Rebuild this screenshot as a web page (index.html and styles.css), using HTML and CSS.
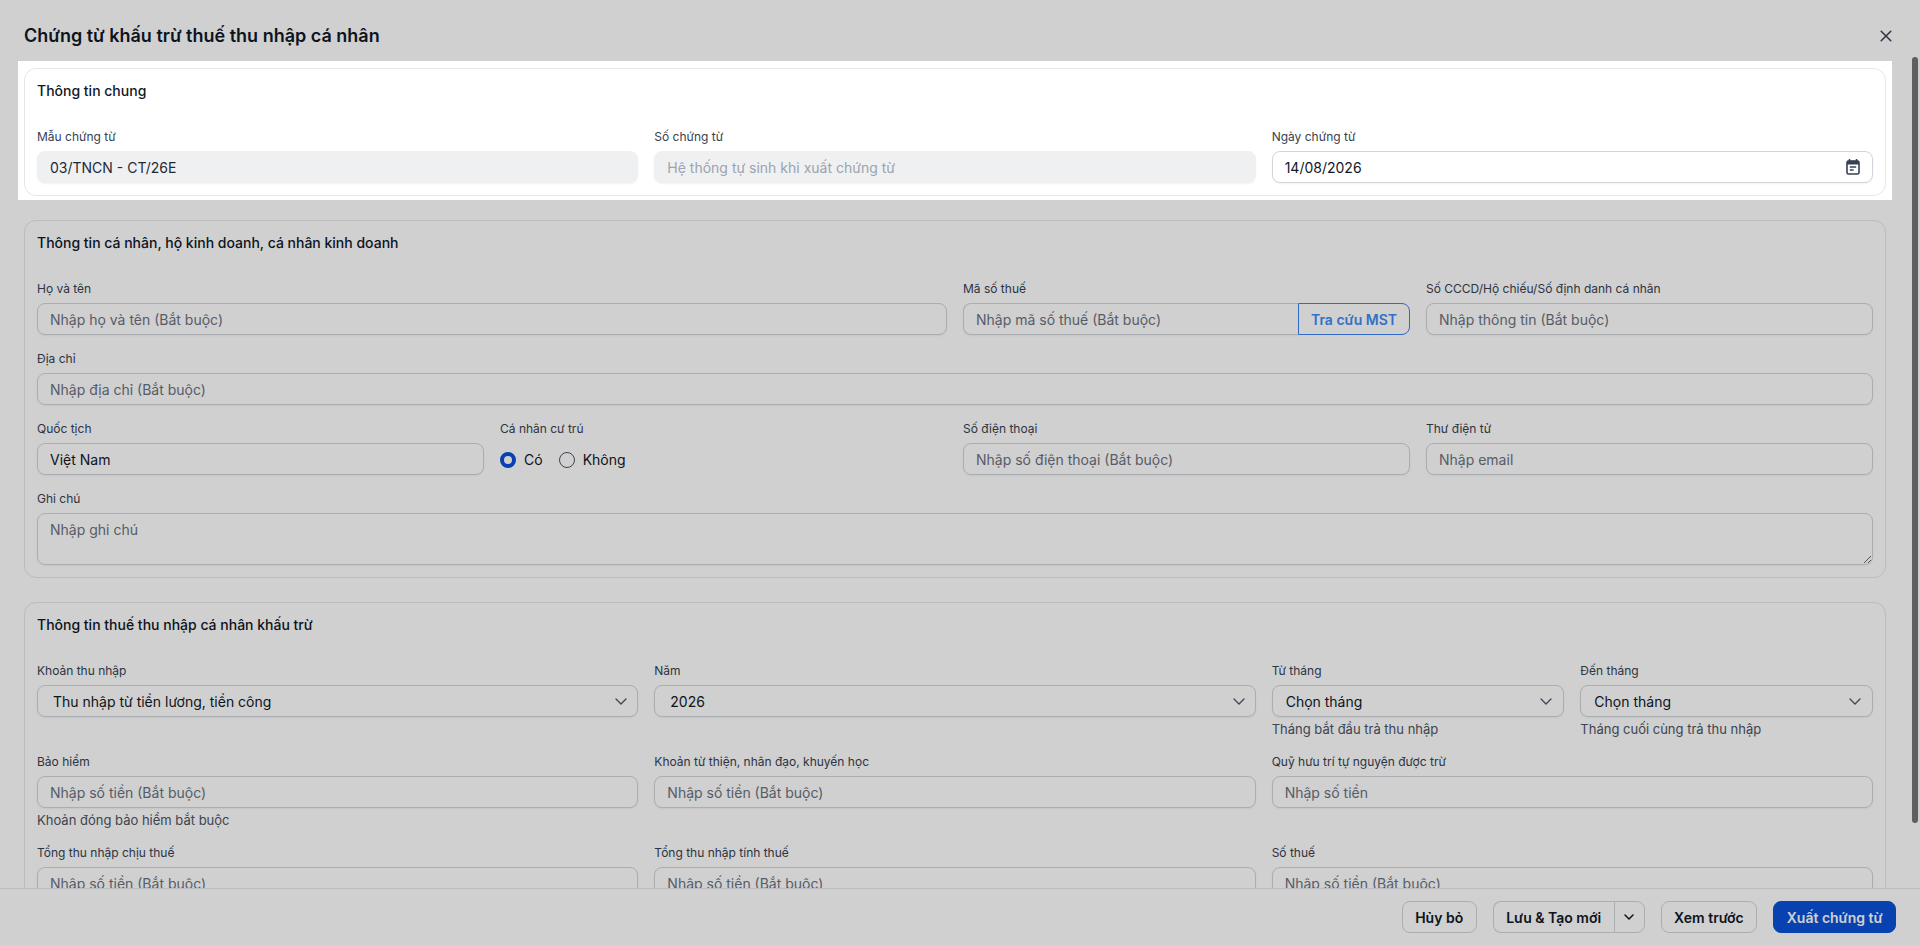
FILE: index.html
```html
<!DOCTYPE html>
<html lang="vi">
<head>
    <meta charset="UTF-8">
    <meta name="viewport" content="width=device-width, initial-scale=1.0">
    <title>Chứng từ khấu trừ thuế thu nhập cá nhân</title>
    <link rel="stylesheet" href="styles.css">
</head>
<body>
    <div class="dialog">
        <!-- Tiêu đề -->
        <header class="dialog-header">
            <h1>Chứng từ khấu trừ thuế thu nhập cá nhân</h1>
            <button class="close-button" aria-label="Đóng">
                <svg width="12" height="12" viewBox="0 0 12 12"><path d="M1.2 1.2l9.6 9.6M10.8 1.2l-9.6 9.6" fill="none" stroke="#374151" stroke-width="1.5" stroke-linecap="round"/></svg>
            </button>
        </header>

        <main class="dialog-body">
            <!-- Thông tin chung -->
            <section class="card">
                <h2>Thông tin chung</h2>
                <div class="form-grid">
                    <div class="field span-4">
                        <label>Mẫu chứng từ</label>
                        <input class="input filled" type="text" value="03/TNCN - CT/26E" disabled>
                    </div>
                    <div class="field span-4">
                        <label>Số chứng từ</label>
                        <input class="input" type="text" placeholder="Hệ thống tự sinh khi xuất chứng từ" disabled>
                    </div>
                    <div class="field span-4">
                        <label>Ngày chứng từ</label>
                        <div class="box">
                            <span>14/08/2026</span>
                            <svg class="calendar-icon" width="14" height="16" viewBox="0 0 14 16"><path d="M3.5 0.5v2M10.5 0.5v2" stroke="#374151" stroke-width="1.6" stroke-linecap="round"/><rect x="1" y="2" width="12" height="13" rx="1.6" fill="none" stroke="#374151" stroke-width="1.6"/><path d="M1 2.8a1 1 0 0 1 1-1h10a1 1 0 0 1 1 1v2.6H1z" fill="#374151"/><path d="M3.8 8h6.4M3.8 11h3.8" stroke="#374151" stroke-width="1.4"/></svg>
                        </div>
                    </div>
                </div>
            </section>

            <!-- Thông tin cá nhân -->
            <section class="card">
                <h2>Thông tin cá nhân, hộ kinh doanh, cá nhân kinh doanh</h2>
                <div class="form-grid">
                    <div class="field span-6">
                        <label>Họ và tên</label>
                        <input class="input" type="text" placeholder="Nhập họ và tên (Bắt buộc)">
                    </div>
                    <div class="field span-3">
                        <label>Mã số thuế</label>
                        <div class="input-group">
                            <input class="input" type="text" placeholder="Nhập mã số thuế (Bắt buộc)">
                            <button class="lookup-button">Tra cứu MST</button>
                        </div>
                    </div>
                    <div class="field span-3">
                        <label>Số CCCD/Hộ chiếu/Số định danh cá nhân</label>
                        <input class="input" type="text" placeholder="Nhập thông tin (Bắt buộc)">
                    </div>
                    <div class="field span-12">
                        <label>Địa chỉ</label>
                        <input class="input" type="text" placeholder="Nhập địa chỉ (Bắt buộc)">
                    </div>
                    <div class="field span-3">
                        <label>Quốc tịch</label>
                        <input class="input" type="text" value="Việt Nam">
                    </div>
                    <div class="field span-3">
                        <label>Cá nhân cư trú</label>
                        <div class="radio-group">
                            <span class="radio checked"></span><span class="radio-text">Có</span>
                            <span class="radio"></span><span class="radio-text">Không</span>
                        </div>
                    </div>
                    <div class="field span-3">
                        <label>Số điện thoại</label>
                        <input class="input" type="text" placeholder="Nhập số điện thoại (Bắt buộc)">
                    </div>
                    <div class="field span-3">
                        <label>Thư điện tử</label>
                        <input class="input" type="text" placeholder="Nhập email">
                    </div>
                    <div class="field span-12">
                        <label>Ghi chú</label>
                        <textarea class="input textarea" placeholder="Nhập ghi chú"></textarea>
                    </div>
                </div>
            </section>

            <!-- Thông tin thuế -->
            <section class="card">
                <h2>Thông tin thuế thu nhập cá nhân khấu trừ</h2>
                <div class="form-grid">
                    <div class="field span-4">
                        <label>Khoản thu nhập</label>
                        <div class="box select wide">
                            <span>Thu nhập từ tiền lương, tiền công</span>
                            <svg width="12" height="7" viewBox="0 0 12 7"><path d="M1 1l5 5 5-5" fill="none" stroke="#4b5563" stroke-width="1.3" stroke-linecap="round" stroke-linejoin="round"/></svg>
                        </div>
                    </div>
                    <div class="field span-4">
                        <label>Năm</label>
                        <div class="box select wide">
                            <span>2026</span>
                            <svg width="12" height="7" viewBox="0 0 12 7"><path d="M1 1l5 5 5-5" fill="none" stroke="#4b5563" stroke-width="1.3" stroke-linecap="round" stroke-linejoin="round"/></svg>
                        </div>
                    </div>
                    <div class="field span-2">
                        <label>Từ tháng</label>
                        <div class="box select">
                            <span>Chọn tháng</span>
                            <svg width="12" height="7" viewBox="0 0 12 7"><path d="M1 1l5 5 5-5" fill="none" stroke="#4b5563" stroke-width="1.3" stroke-linecap="round" stroke-linejoin="round"/></svg>
                        </div>
                        <p class="hint">Tháng bắt đầu trả thu nhập</p>
                    </div>
                    <div class="field span-2">
                        <label>Đến tháng</label>
                        <div class="box select">
                            <span>Chọn tháng</span>
                            <svg width="12" height="7" viewBox="0 0 12 7"><path d="M1 1l5 5 5-5" fill="none" stroke="#4b5563" stroke-width="1.3" stroke-linecap="round" stroke-linejoin="round"/></svg>
                        </div>
                        <p class="hint">Tháng cuối cùng trả thu nhập</p>
                    </div>
                    <div class="field span-4">
                        <label>Bảo hiểm</label>
                        <input class="input" type="text" placeholder="Nhập số tiền (Bắt buộc)">
                        <p class="hint">Khoản đóng bảo hiểm bắt buộc</p>
                    </div>
                    <div class="field span-4">
                        <label>Khoản từ thiện, nhân đạo, khuyến học</label>
                        <input class="input" type="text" placeholder="Nhập số tiền (Bắt buộc)">
                    </div>
                    <div class="field span-4">
                        <label>Quỹ hưu trí tự nguyện được trừ</label>
                        <input class="input" type="text" placeholder="Nhập số tiền">
                    </div>
                    <div class="field span-4">
                        <label>Tổng thu nhập chịu thuế</label>
                        <input class="input" type="text" placeholder="Nhập số tiền (Bắt buộc)">
                    </div>
                    <div class="field span-4">
                        <label>Tổng thu nhập tính thuế</label>
                        <input class="input" type="text" placeholder="Nhập số tiền (Bắt buộc)">
                    </div>
                    <div class="field span-4">
                        <label>Số thuế</label>
                        <input class="input" type="text" placeholder="Nhập số tiền (Bắt buộc)">
                    </div>
                </div>
            </section>
        </main>

        <!-- Các nút thao tác -->
        <footer class="dialog-footer">
            <button class="btn">Hủy bỏ</button>
            <div class="btn-split">
                <button class="btn">Lưu &amp; Tạo mới</button>
                <button class="btn btn-arrow" aria-label="Thêm">
                    <svg width="10" height="6" viewBox="0 0 10 6"><path d="M1 1l4 4 4-4" fill="none" stroke="#111827" stroke-width="1.5" stroke-linecap="round" stroke-linejoin="round"/></svg>
                </button>
            </div>
            <button class="btn">Xem trước</button>
            <button class="btn btn-primary">Xuất chứng từ</button>
        </footer>
    </div>

    <!-- Thanh cuộn -->
    <div class="scroll-thumb"></div>

    <!-- Lớp phủ hướng dẫn, làm nổi bật phần Thông tin chung -->
    <div class="spotlight"></div>
</body>
</html>
```

FILE: styles.css
```css
/* Estilos generales */
* {
    box-sizing: border-box;
}

html, body {
    height: 100%;
}

body {
    margin: 0;
    background-color: #fff;
    color: #111827;
    font-family: 'Inter', 'Liberation Sans', sans-serif;
    font-size: 14px;
    overflow: hidden;
}

.dialog {
    display: flex;
    flex-direction: column;
    height: 100vh;
}

/* Header */
.dialog-header {
    flex: none;
    display: flex;
    align-items: center;
    justify-content: space-between;
    height: 57px;
    padding: 22px 28px 7px 24px;
}

.dialog-header h1 {
    margin: 0;
    font-size: 18px;
    font-weight: 600;
    line-height: 28px;
}

.close-button {
    display: flex;
    padding: 0;
    background: none;
    border: none;
}

/* Body */
.dialog-body {
    flex: 1;
    min-height: 0;
    overflow: hidden;
    padding: 11px 34px 0 24px;
}

.scroll-thumb {
    position: absolute;
    top: 57px;
    right: 2px;
    width: 6px;
    height: 766px;
    background-color: #757575;
    border-radius: 3px;
}

.card {
    padding: 12px;
    margin-bottom: 24px;
    border: 1px solid #e5e7eb;
    border-radius: 12px;
}

.card:last-child {
    margin-bottom: 0;
}

.card h2 {
    margin: 0 0 28px;
    font-size: 14px;
    font-weight: 500;
    line-height: 20px;
}

.form-grid {
    display: grid;
    grid-template-columns: repeat(12, 1fr);
    gap: 16px;
}

.span-2 { grid-column: span 2; }
.span-3 { grid-column: span 3; }
.span-4 { grid-column: span 4; }
.span-6 { grid-column: span 6; }
.span-12 { grid-column: span 12; }

.field {
    min-width: 0;
}

.field label {
    display: block;
    margin-bottom: 6px;
    color: #374151;
    font-size: 12px;
    line-height: 16px;
}

/* Inputs */
.input,
.box {
    width: 100%;
    height: 32px;
    padding: 0 12px;
    background-color: #fff;
    border: 1px solid #d1d5db;
    border-radius: 8px;
    box-shadow: 0 1px 2px rgba(0, 0, 0, 0.05);
    color: #111827;
    font-family: inherit;
    font-size: 14px;
    outline: none;
}

.input::placeholder {
    color: #6b7280;
    opacity: 1;
}

.input:disabled {
    background-color: #eff0f2;
    border-color: #eff0f2;
}

.input:disabled::placeholder {
    color: #9ca3af;
}

.input.filled {
    color: #1f2937;
}

.textarea {
    display: block;
    height: 52px;
    padding-top: 6px;
    line-height: 20px;
    resize: vertical;
}

.box {
    display: flex;
    align-items: center;
    justify-content: space-between;
}

.select {
    padding: 0 11px 0 13px;
}

.select.wide {
    padding-left: 15px;
    padding-right: 10px;
}

.hint {
    margin: 3px 0 0;
    color: #4b5563;
    font-size: 13px;
    line-height: 18px;
}

.input-group {
    display: flex;
}

.input-group .input {
    flex: 1;
    min-width: 0;
    border-right: none;
    border-radius: 8px 0 0 8px;
}

.lookup-button {
    flex: none;
    width: 112px;
    height: 32px;
    padding: 0;
    background-color: #fff;
    border: 1px solid #3b82f6;
    border-radius: 0 8px 8px 0;
    color: #3b8bf6;
    font-family: inherit;
    font-size: 14px;
    font-weight: 600;
}

/* Radio */
.radio-group {
    display: flex;
    align-items: center;
    height: 32px;
    padding-top: 1px;
}

.radio {
    width: 16px;
    height: 16px;
    background-color: #fff;
    border: 1px solid #4b5563;
    border-radius: 50%;
}

.radio.checked {
    border: 4px solid #0b50d8;
}

.radio-text {
    margin: 0 16px 0 8px;
}

/* Footer */
.dialog-footer {
    flex: none;
    display: flex;
    justify-content: flex-end;
    gap: 16px;
    height: 57px;
    padding: 12px 24px;
    background-color: #fff;
    border-top: 1px solid #e5e7eb;
}

.btn {
    height: 32px;
    padding: 0 12.5px;
    background-color: #fff;
    border: 1px solid #d1d5db;
    border-radius: 8px;
    color: #111827;
    font-family: inherit;
    font-size: 14px;
    font-weight: 600;
    white-space: nowrap;
}

.btn-split {
    display: flex;
}

.btn-split .btn:first-child {
    border-right: none;
    border-radius: 8px 0 0 8px;
}

.btn-arrow {
    display: flex;
    align-items: center;
    justify-content: center;
    width: 31px;
    padding: 0;
    border-radius: 0 8px 8px 0;
}

.btn-primary {
    background-color: #0b50d8;
    border-color: #0b50d8;
    color: #fff;
}

/* Overlay */
.spotlight {
    position: absolute;
    top: 61px;
    left: 18px;
    width: 1874px;
    height: 139px;
    box-shadow: 0 0 0 3000px rgba(0, 0, 0, 0.185);
    pointer-events: none;
}
```
